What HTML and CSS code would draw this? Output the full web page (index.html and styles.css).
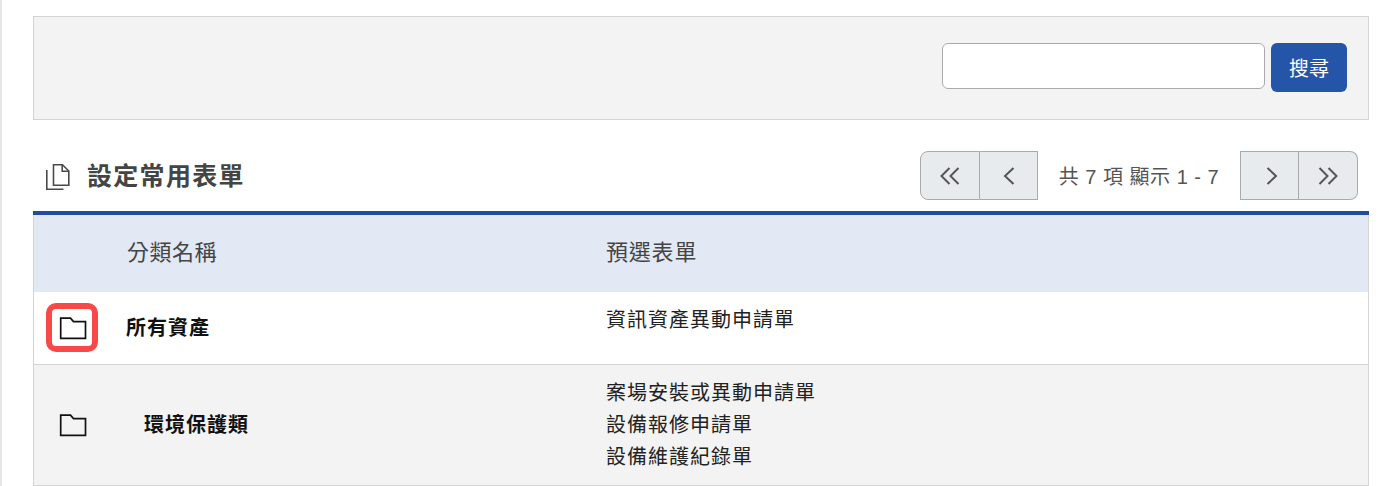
FILE: index.html
```html
<!DOCTYPE html>
<html lang="zh-Hant">
<head>
    <meta charset="UTF-8">
    <title>設定常用表單</title>
    <link rel="stylesheet" href="styles.css">
</head>
<body>
    <div class="content">
        <div class="search-panel">
            <input class="search-input" type="text">
            <button class="search-btn">搜尋</button>
        </div>

        <div class="title-bar">
            <div class="page-title">
                <svg class="title-icon" width="26" height="28" viewBox="0 0 26 28" fill="none" stroke="#4a4a4a" stroke-width="1.6">
                    <path d="M8.5 1.8H17.5L23.8 8V22.2H8.5Z"/>
                    <path d="M17.2 1.8V8.3H23.8"/>
                    <path d="M1.8 7V26.2H18.5"/>
                </svg>
                <h2>設定常用表單</h2>
            </div>
            <div class="pager">
                <div class="pager-group">
                    <button class="pager-btn wide">
                        <svg width="20" height="18" viewBox="0 0 20 18" fill="none" stroke="#555" stroke-width="2"><path d="M9.5 1L1.5 9L9.5 17M18.5 1L10.5 9L18.5 17"/></svg>
                    </button>
                    <button class="pager-btn">
                        <svg width="12" height="18" viewBox="0 0 12 18" fill="none" stroke="#555" stroke-width="2"><path d="M10.5 1L2 9L10.5 17"/></svg>
                    </button>
                </div>
                <span class="pager-info">共 7 項 顯示 1 - 7</span>
                <div class="pager-group">
                    <button class="pager-btn next">
                        <svg width="12" height="18" viewBox="0 0 12 18" fill="none" stroke="#555" stroke-width="2"><path d="M1.5 1L10 9L1.5 17"/></svg>
                    </button>
                    <button class="pager-btn last">
                        <svg width="20" height="18" viewBox="0 0 20 18" fill="none" stroke="#555" stroke-width="2"><path d="M1.5 1L9.5 9L1.5 17M10.5 1L18.5 9L10.5 17"/></svg>
                    </button>
                </div>
            </div>
        </div>

        <table class="form-table">
            <tr class="head-row">
                <th class="col-icon"></th>
                <th class="col-name">分類名稱</th>
                <th>預選表單</th>
            </tr>
            <tr class="row-first">
                <td class="col-icon">
                    <span class="folder-mark">
                        <svg width="28" height="24" viewBox="0 0 28 24" fill="none" stroke="#111" stroke-width="1.7"><path d="M1.7 2.2H11.5L14.5 5.6H26.5V22.3H1.7Z"/></svg>
                    </span>
                </td>
                <td class="col-name">所有資產</td>
                <td class="forms top">
                    <div>資訊資產異動申請單</div>
                </td>
            </tr>
            <tr class="row-alt">
                <td class="col-icon">
                    <span class="folder-plain">
                        <svg width="28" height="24" viewBox="0 0 28 24" fill="none" stroke="#111" stroke-width="1.7"><path d="M1.7 2.2H11.5L14.5 5.6H26.5V22.3H1.7Z"/></svg>
                    </span>
                </td>
                <td class="col-name sub">環境保護類</td>
                <td class="forms">
                    <div>案場安裝或異動申請單</div>
                    <div>設備報修申請單</div>
                    <div>設備維護紀錄單</div>
                </td>
            </tr>
        </table>
    </div>
</body>
</html>
```

FILE: styles.css
```css
body {
    margin: 0;
    height: 486px;
    overflow: hidden;
    background-color: #fff;
    border-left: 2px solid #e6e6e6;
    font-family: 'Liberation Sans', 'Noto Sans CJK TC', sans-serif;
    color: #333;
}
.content {
    margin-left: 31px;
    width: 1336px;
    padding-top: 16px;
}
.search-panel {
    box-sizing: border-box;
    height: 104px;
    padding: 26px 21px 0 0;
    display: flex;
    justify-content: flex-end;
    align-items: flex-start;
    gap: 6px;
    background-color: #f3f3f3;
    border: 1px solid #d4d4d4;
}
.search-input {
    box-sizing: border-box;
    width: 323px;
    height: 46px;
    background: #fff;
    border: 1px solid #aaa;
    border-radius: 6px;
}
.search-btn {
    width: 76px;
    height: 49px;
    padding: 0;
    border: 0;
    border-radius: 6px;
    background-color: #2455a8;
    color: #fff;
    font-family: inherit;
    font-size: 20px;
}
.title-bar {
    box-sizing: border-box;
    height: 95px;
    padding: 31px 11px 0 13px;
    display: flex;
    justify-content: space-between;
    align-items: flex-start;
    border-bottom: 4px solid #1f4e9e;
}
.page-title {
    display: flex;
    align-items: center;
    height: 49px;
    gap: 16px;
}
.page-title h2 {
    margin: 0;
    padding-bottom: 3px;
    font-size: 25px;
    font-weight: 700;
    letter-spacing: 1.3px;
    color: #444;
}
.title-icon {
    margin-top: 2px;
    margin-left: -1px;
}
.pager {
    display: flex;
    align-items: center;
}
.pager-group {
    display: flex;
}
.pager-btn {
    box-sizing: border-box;
    width: 58px;
    height: 49px;
    padding: 0;
    display: flex;
    align-items: center;
    justify-content: center;
    background-color: #e8ebee;
    border: 1px solid #aaa;
}
.pager-btn.wide {
    width: 60px;
}
.pager-btn + .pager-btn {
    border-left: 0;
}
.pager-btn.next {
    width: 59px;
    padding-left: 4px;
}
.pager-btn.last {
    width: 59px;
}
.pager-group:first-child .pager-btn:first-child {
    border-radius: 8px 0 0 8px;
}
.pager-group:last-child .pager-btn:last-child {
    border-radius: 0 8px 8px 0;
}
.pager-info {
    width: 202px;
    text-align: center;
    font-size: 20px;
    letter-spacing: 0.5px;
    color: #555;
}
.form-table {
    width: 100%;
    border-collapse: collapse;
    table-layout: fixed;
    border-left: 1px solid #d4d4d4;
    border-right: 1px solid #d4d4d4;
    font-size: 20px;
    letter-spacing: 1px;
}
.head-row {
    height: 77px;
    background-color: #e2e8f4;
}
.head-row th {
    padding: 0 0 7px;
    text-align: left;
    font-size: 22px;
    font-weight: 400;
    color: #444;
    letter-spacing: 0.8px;
}
.head-row th.col-name {
    padding-left: 1px;
    letter-spacing: 0.5px;
}
.col-icon {
    width: 92px;
}
.form-table .col-name {
    width: 479px;
}
td {
    padding: 0;
    border-bottom: 1px solid #d4d4d4;
    color: #222;
}
td.col-name {
    padding-bottom: 3px;
    font-weight: 700;
    color: #111;
}
td.sub {
    padding-bottom: 2px;
    padding-left: 18px;
}
.row-first {
    height: 72px;
}
.row-alt {
    height: 121px;
    background-color: #f3f3f3;
}
.forms div {
    line-height: 32px;
}
.forms.top {
    vertical-align: top;
    padding-top: 12px;
}
.folder-mark, .folder-plain {
    display: flex;
    align-items: center;
    justify-content: center;
    box-sizing: border-box;
    width: 52px;
    height: 49px;
    padding-left: 2px;
    margin-left: 12px;
}
.folder-mark {
    border: 6px solid #f94848;
    border-radius: 10px;
}
```
